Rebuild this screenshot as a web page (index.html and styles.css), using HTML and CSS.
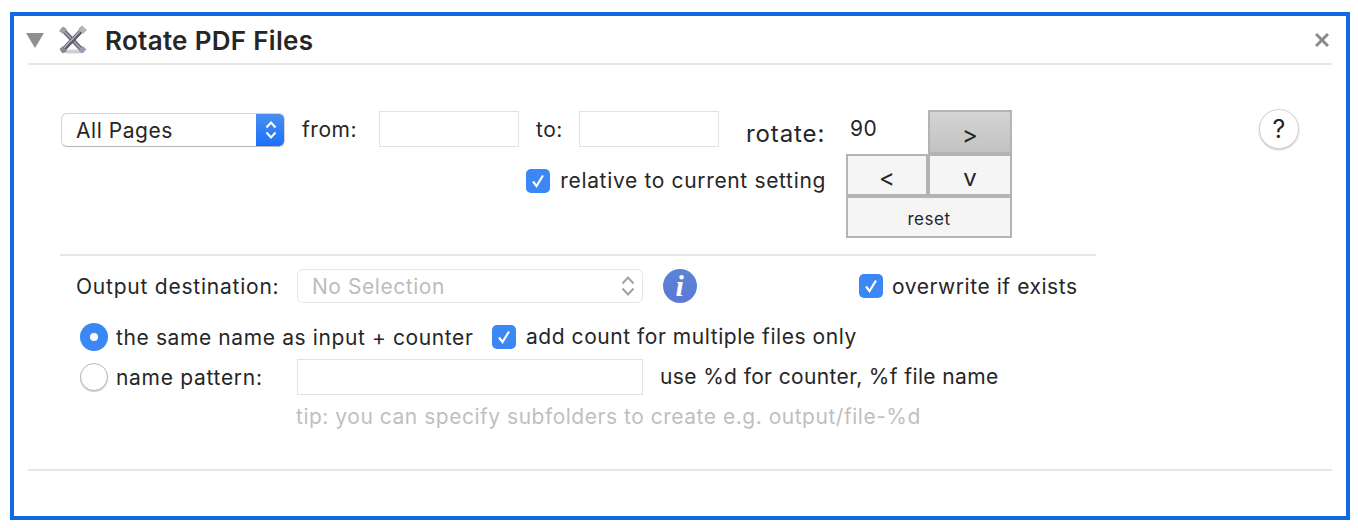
FILE: index.html
```html
<!DOCTYPE html>
<html lang="en">
<head>
    <meta charset="UTF-8">
    <meta name="viewport" content="width=device-width, initial-scale=1.0">
    <title>Rotate PDF Files</title>
    <link rel="stylesheet" href="styles.css">
</head>
<body>
    <div class="panel">
        <div class="head">
            <span class="disclosure"></span>
            <svg class="tool-icon" width="30" height="30" viewBox="0 0 30 30">
                <ellipse cx="15" cy="26.5" rx="12" ry="2" fill="#cfcfcf"/>
                <path d="M5 5 L24 25" stroke="#6a677d" stroke-width="4.6" stroke-linecap="round"/>
                <path d="M4.5 4.5 L23.5 24.5" stroke="#a8a6b6" stroke-width="1.6" stroke-linecap="round"/>
                <path d="M24 5 L5 25" stroke="#5a576d" stroke-width="4.6" stroke-linecap="round"/>
                <path d="M23.5 4.5 L4.5 24.5" stroke="#b3b1c0" stroke-width="1.6" stroke-linecap="round"/>
                <path d="M1 6 L5 1.5 L9 4 L5 9 Z" fill="#a09dae"/>
                <path d="M20 4 L24 0.5 L29 5 L25 9 Z" fill="#b5b3c0"/>
                <path d="M1.5 24 L5 21 L9 26 L5 28.5 Z" fill="#8b8899"/>
                <path d="M20.5 25.5 L25 21 L28.5 24.5 L24 28.5 Z" fill="#a09dae"/>
            </svg>
            <h1 class="title">Rotate PDF Files</h1>
            <svg class="close" width="14" height="14" viewBox="0 0 14 14">
                <path d="M1 1 L13 13 M13 1 L1 13" stroke="#8b8b8b" stroke-width="3"/>
            </svg>
        </div>

        <div class="top">
            <div class="range">
                <div class="range-row">
                    <div class="popup popup-pages">
                        <span class="popup-text">All Pages</span>
                        <span class="popup-arrows">
                            <svg width="14" height="22" viewBox="0 0 14 22">
                                <path d="M2.5 8.5 L7 3.5 L11.5 8.5 M2.5 13.5 L7 18.5 L11.5 13.5" fill="none" stroke="#fff" stroke-width="2"/>
                            </svg>
                        </span>
                    </div>
                    <label class="from-label">from:</label>
                    <input class="field field-page" type="text">
                    <label class="to-label">to:</label>
                    <input class="field field-page" type="text">
                    <span class="rotate-label">rotate:</span>
                </div>
                <div class="relative-row">
                    <span class="check">
                        <svg width="16" height="16" viewBox="0 0 16 16"><path d="M3 8.5 L6.5 13 L13 2.5" fill="none" stroke="#fff" stroke-width="2.2"/></svg>
                    </span>
                    <span class="relative-text">relative to current setting</span>
                </div>
            </div>

            <div class="rotate-pad">
                <span class="angle">90</span>
                <button class="pad-btn pad-btn-on" type="button">&gt;</button>
                <button class="pad-btn" type="button">&lt;</button>
                <button class="pad-btn" type="button">v</button>
                <button class="pad-btn pad-reset" type="button">reset</button>
            </div>

            <button class="help" type="button">?</button>
        </div>

        <div class="divider"></div>

        <div class="output">
            <div class="output-row">
                <span class="output-label">Output destination:</span>
                <div class="popup popup-off">
                    <span class="popup-text">No Selection</span>
                    <svg width="16" height="24" viewBox="0 0 16 24">
                        <path d="M2.5 9.5 L8 3.5 L13.5 9.5 M2.5 14.5 L8 20.5 L13.5 14.5" fill="none" stroke="#a3a3a3" stroke-width="2"/>
                    </svg>
                </div>
                <span class="info">i</span>
                <span class="overwrite">
                    <span class="check">
                        <svg width="16" height="16" viewBox="0 0 16 16"><path d="M3 8.5 L6.5 13 L13 2.5" fill="none" stroke="#fff" stroke-width="2.2"/></svg>
                    </span>
                    <span>overwrite if exists</span>
                </span>
            </div>
            <div class="name-row">
                <span class="radio radio-on"></span>
                <span class="radio-text">the same name as input + counter</span>
                <span class="check">
                    <svg width="16" height="16" viewBox="0 0 16 16"><path d="M3 8.5 L6.5 13 L13 2.5" fill="none" stroke="#fff" stroke-width="2.2"/></svg>
                </span>
                <span class="multi-text">add count for multiple files only</span>
            </div>
            <div class="pattern-row">
                <span class="radio"></span>
                <span class="pattern-label">name pattern:</span>
                <input class="field field-pattern" type="text">
                <span class="pattern-hint">use %d for counter, %f file name</span>
            </div>
            <p class="tip">tip: you can specify subfolders to create e.g. output/file-%d</p>
        </div>

        <div class="foot-line"></div>
    </div>
</body>
</html>
```

FILE: styles.css
```css
* {
    box-sizing: border-box;
}
body {
    margin: 0;
    padding: 12px 8px 8px 10px;
    background: white;
    font-family: Inter, "Noto Sans", sans-serif;
    font-size: 21px;
    letter-spacing: 0.55px;
    color: #262626;
}
.panel {
    height: 508px;
    padding: 0 14px;
    background: white;
    border: 4px solid #0f69e0;
}

/* header */
.head {
    display: flex;
    align-items: center;
    height: 49px;
    padding-top: 1px;
    border-bottom: 2px solid #e6e6e6;
}
.disclosure {
    width: 0;
    height: 0;
    margin-left: -2px;
    border-left: 9px solid transparent;
    border-right: 9px solid transparent;
    border-top: 15px solid #8f8f8f;
}
.tool-icon {
    margin-left: 14px;
}
.title {
    flex: 1;
    margin: 0 0 0 17px;
    font-size: 26px;
    font-weight: 600;
    letter-spacing: 0.3px;
}
.close {
    margin-right: 3px;
}

/* page range and rotation */
.top {
    display: flex;
    align-items: flex-start;
    padding: 45px 0 0 33px;
}
.range {
    width: 765px;
}
.range-row {
    display: flex;
    align-items: center;
    height: 36px;
    margin-top: 1px;
}
.popup {
    display: flex;
    align-items: center;
    justify-content: space-between;
    width: 224px;
    height: 34px;
    background: white;
    border: 1px solid #d2d2d2;
    border-bottom-color: #b5b5b5;
    border-radius: 6px;
    overflow: hidden;
}
.popup-pages {
    margin-top: 2px;
}
.popup-text {
    padding-left: 14px;
}
.popup-arrows {
    display: flex;
    align-items: center;
    justify-content: center;
    width: 29px;
    height: 34px;
    margin: -1px;
    background: linear-gradient(#4a90ee, #1a6ffb);
}
.from-label {
    margin-left: 17px;
    width: 77px;
}
.to-label {
    margin-left: 17px;
    width: 43px;
}
.field {
    height: 36px;
    background: white;
    border: 1px solid #e2e2e2;
    outline: none;
}
.field-page {
    width: 140px;
}
.rotate-label {
    margin: 8px 0 0 27px;
    font-size: 24px;
    letter-spacing: 0.9px;
}
.relative-row {
    display: flex;
    align-items: center;
    justify-content: flex-end;
    gap: 10px;
    margin: 21px 0 0 0;
}
.relative-text {
    letter-spacing: 0.66px;
}
.check {
    display: flex;
    align-items: center;
    justify-content: center;
    width: 24px;
    height: 24px;
    background: #3b87f5;
    border-radius: 5px;
}
.rotate-pad {
    display: grid;
    grid-template-columns: 82px 84px;
    grid-template-rows: 44px 42px 42px;
    width: 166px;
    margin-left: 20px;
}
.angle {
    padding: 6px 0 0 4px;
}
.pad-btn {
    margin: 0;
    padding: 4px 0 0;
    font-family: inherit;
    font-size: 24px;
    color: #262626;
    background: #f5f5f5;
    border: 2px solid #b4b4b4;
    border-radius: 0;
}
.pad-btn-on {
    background: linear-gradient(#d4d4d4, #c2c2c2);
}
.pad-reset {
    grid-column: 1 / 3;
    font-size: 17px;
    letter-spacing: 0.5px;
}
.help {
    width: 40px;
    height: 40px;
    margin: -1px 0 0 247px;
    padding: 0;
    font-family: inherit;
    font-size: 25px;
    color: #262626;
    background: white;
    border: 1px solid #d4d4d4;
    border-radius: 50%;
    box-shadow: 0 1px 2px #c8c8c8;
}

.divider {
    width: 1036px;
    height: 2px;
    margin: 16px 0 0 32px;
    background: #e6e6e6;
}

/* output options */
.output {
    padding: 13px 0 0 48px;
}
.output-row {
    display: flex;
    align-items: center;
    height: 34px;
}
.output-label {
    width: 221px;
    letter-spacing: 0.77px;
}
.popup-off {
    width: 346px;
    padding-right: 6px;
    border-color: #e6e6e6;
    color: #bdbdbd;
}
.info {
    width: 34px;
    height: 34px;
    margin-left: 20px;
    font-family: "Liberation Serif", serif;
    font-size: 30px;
    font-style: italic;
    font-weight: 700;
    line-height: 34px;
    text-align: center;
    color: white;
    background: linear-gradient(#5a84d8, #5d78d2);
    border-radius: 50%;
}
.overwrite {
    display: flex;
    align-items: center;
    gap: 9px;
    margin-left: 162px;
}
.name-row {
    display: flex;
    align-items: center;
    height: 28px;
    margin: 20px 0 0 4px;
}
.radio {
    flex: none;
    width: 28px;
    height: 28px;
    background: white;
    border: 1px solid #b8b8b8;
    border-radius: 50%;
    box-shadow: 0 1px 1px #cfcfcf;
}
.radio-on {
    position: relative;
    background: #3b87f5;
    border: none;
    box-shadow: none;
}
.radio-on::after {
    content: "";
    position: absolute;
    top: 10px;
    left: 10px;
    width: 8px;
    height: 8px;
    background: white;
    border-radius: 50%;
}
.radio-text {
    width: 376px;
    margin: 1px 0 0 8px;
    letter-spacing: 0.61px;
}
.multi-text {
    margin: -2px 0 0 10px;
}
.pattern-row {
    display: flex;
    align-items: center;
    height: 36px;
    margin: 8px 0 0 4px;
}
.pattern-label {
    width: 181px;
    margin: 1px 0 0 8px;
    letter-spacing: 0.7px;
}
.field-pattern {
    width: 346px;
}
.pattern-hint {
    margin: -2px 0 0 17px;
    letter-spacing: 0.37px;
}
.tip {
    margin: 9px 0 0 220px;
    letter-spacing: 0.52px;
    color: #bfbfbf;
}

.foot-line {
    height: 2px;
    margin-top: 40px;
    background: #e6e6e6;
}
```
